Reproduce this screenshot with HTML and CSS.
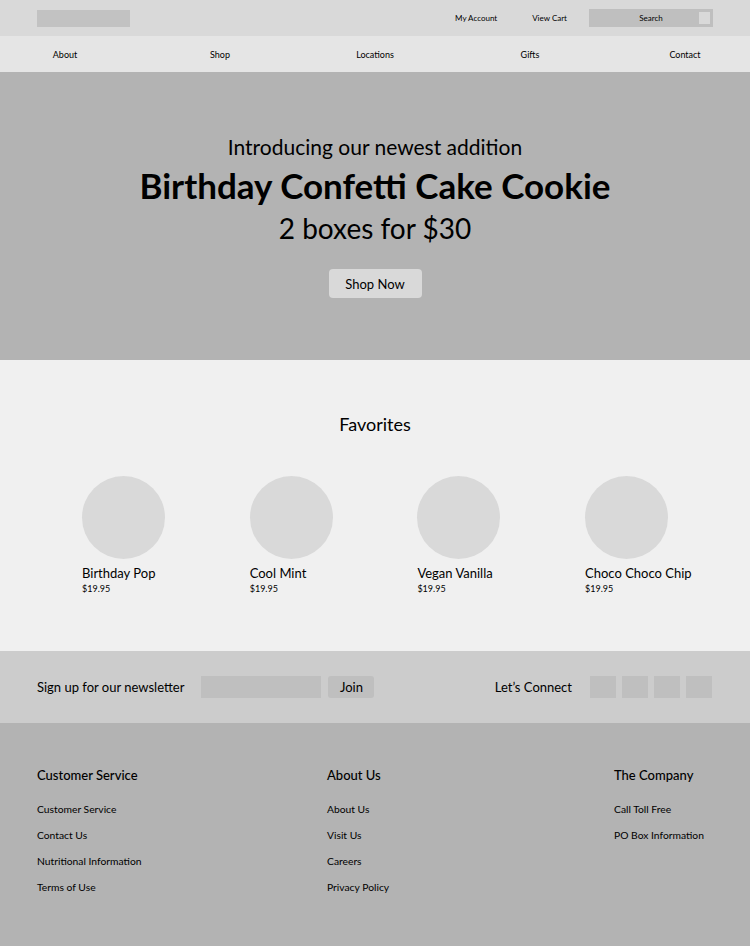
FILE: index.html
```html
<!DOCTYPE html>
<html lang="en">
<head>
<meta charset="utf-8">
<title>Cookie Shop</title>
<link rel="stylesheet" href="styles.css">
</head>
<body>
<header class="topbar">
  <div class="logo"></div>
  <div class="utils">
    <a class="util-link" href="#">My Account</a>
    <a class="util-link" href="#">View Cart</a>
    <div class="search"><span class="search-label">Search</span><span class="search-btn"></span></div>
  </div>
</header>
<nav class="mainnav">
  <a href="#">About</a>
  <a href="#">Shop</a>
  <a href="#">Locations</a>
  <a href="#">Gifts</a>
  <a href="#">Contact</a>
</nav>
<section class="hero">
  <p class="hero-intro">Introducing our newest addition</p>
  <h1 class="hero-title">Birthday Confetti Cake Cookie</h1>
  <p class="hero-offer">2 boxes for $30</p>
  <a class="hero-btn" href="#">Shop Now</a>
</section>
<section class="favorites">
  <h2 class="fav-title">Favorites</h2>
  <div class="fav-grid">
    <div class="fav-item"><div class="fav-img"></div><div class="fav-name">Birthday Pop</div><div class="fav-price">$19.95</div></div>
    <div class="fav-item"><div class="fav-img"></div><div class="fav-name">Cool Mint</div><div class="fav-price">$19.95</div></div>
    <div class="fav-item"><div class="fav-img"></div><div class="fav-name">Vegan Vanilla</div><div class="fav-price">$19.95</div></div>
    <div class="fav-item"><div class="fav-img"></div><div class="fav-name">Choco Choco Chip</div><div class="fav-price">$19.95</div></div>
  </div>
</section>
<section class="newsletter">
  <div class="nl-left">
    <span class="nl-label">Sign up for our newsletter</span>
    <div class="nl-input"></div>
    <a class="nl-join" href="#">Join</a>
  </div>
  <div class="nl-right">
    <span class="nl-label">Let’s Connect</span>
    <div class="socials"><span></span><span></span><span></span><span></span></div>
  </div>
</section>
<footer class="footer">
  <div class="fcol">
    <h3>Customer Service</h3>
    <a href="#">Customer Service</a>
    <a href="#">Contact Us</a>
    <a href="#">Nutritional Information</a>
    <a href="#">Terms of Use</a>
  </div>
  <div class="fcol">
    <h3>About Us</h3>
    <a href="#">About Us</a>
    <a href="#">Visit Us</a>
    <a href="#">Careers</a>
    <a href="#">Privacy Policy</a>
  </div>
  <div class="fcol">
    <h3>The Company</h3>
    <a href="#">Call Toll Free</a>
    <a href="#">PO Box Information</a>
  </div>
</footer>
</body>
</html>
```
FILE: styles.css
```css
* { box-sizing: border-box; }
html, body { margin: 0; padding: 0; }
body {
  font-family: "Lato", "Noto Sans", sans-serif;
  color: #000;
  background: #b3b3b3;
}
a { color: #000; text-decoration: none; }
p, h1, h2, h3 { margin: 0; }

.topbar {
  height: 36px;
  background: #d9d9d9;
  display: flex;
  align-items: center;
  justify-content: space-between;
  padding: 0 37px;
}
.logo { width: 93px; height: 17px; background: #c2c2c2; }
.utils { display: flex; align-items: center; }
.util-link { font-size: 8px; margin-right: 35px; }
.util-link:nth-child(2) { margin-right: 22px; }
.search {
  width: 124px; height: 18px;
  background: #bfbfbf;
  display: flex; align-items: center; justify-content: center;
  position: relative;
}
.search-label { font-size: 8px; }
.search-btn {
  position: absolute; right: 3px; top: 3px;
  width: 11px; height: 12px; background: #d9d9d9;
}

.mainnav {
  height: 36px;
  background: #e5e5e5;
  display: flex;
  align-items: center;
  justify-content: center;
  overflow: hidden;
  font-size: 9px;
}
.mainnav a { flex: 0 0 155px; text-align: center; }

.hero {
  height: 288px;
  background: #b3b3b3;
  display: flex;
  flex-direction: column;
  align-items: center;
  padding-top: 62px;
}
.hero-intro { font-size: 21px; line-height: 26px; }
.hero-title { font-size: 35px; font-weight: 700; line-height: 40px; margin-top: 5px; }
.hero-offer { font-size: 28px; line-height: 34px; margin-top: 6px; }
.hero-btn {
  margin-top: 24px;
  width: 93px; height: 29px;
  background: #d9d9d9;
  border-radius: 4px;
  display: flex; align-items: center; justify-content: center;
  font-size: 13px;
}

.favorites {
  height: 291px;
  background: #f0f0f0;
  padding-top: 53px;
}
.fav-title { text-align: center; font-size: 18px; font-weight: 400; line-height: 22px; }
.fav-grid {
  display: grid;
  grid-template-columns: repeat(4, 167.7px);
  margin-top: 41px;
  padding-left: 82px;
}
.fav-img { width: 83px; height: 83px; border-radius: 50%; background: #d9d9d9; }
.fav-name { font-size: 13px; line-height: 16px; margin-top: 6px; }
.fav-price { font-size: 9px; line-height: 12px; margin-top: 2px; }

.newsletter {
  height: 72px;
  background: #cccccc;
  display: flex;
  align-items: center;
  justify-content: space-between;
  padding: 0 38px 0 37px;
}
.nl-left, .nl-right { display: flex; align-items: center; }
.nl-label { font-size: 13px; }
.nl-input { width: 120px; height: 22px; background: #bfbfbf; margin-left: 17px; }
.nl-join {
  width: 46px; height: 22px; margin-left: 7px;
  background: #bfbfbf; border-radius: 3px;
  display: flex; align-items: center; justify-content: center;
  font-size: 13px;
}
.socials { display: flex; gap: 6px; margin-left: 18px; }
.socials span { width: 26px; height: 22px; background: #bfbfbf; }

.footer {
  height: 223px;
  background: #b3b3b3;
  display: grid;
  grid-template-columns: 290px 287px 1fr;
  align-items: start;
  padding: 44px 0 0 37px;
}
.fcol { display: flex; flex-direction: column; align-items: flex-start; }
.fcol h3 { font-size: 13px; font-weight: 500; line-height: 16px; margin-bottom: 19px; }
.fcol a { font-size: 10.3px; line-height: 14px; margin-bottom: 12px; }
```
